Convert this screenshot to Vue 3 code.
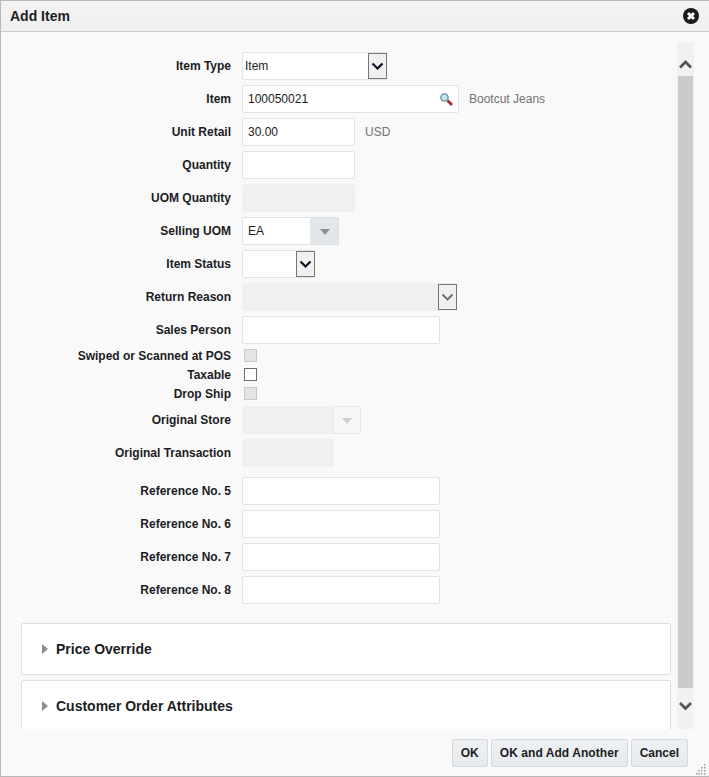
<script setup>
const refs = ['Reference No. 5', 'Reference No. 6', 'Reference No. 7', 'Reference No. 8']
const panels = ['Price Override', 'Customer Order Attributes']
</script>

<template>
  <div class="dialog">
    <header class="head">
      <h1 class="title">Add Item</h1>
      <svg class="close" width="16" height="16" viewBox="0 0 16 16">
        <circle cx="8" cy="8" r="8" fill="#1a1a1a" />
        <path d="M5 5l6 6M11 5l-6 6" stroke="#fff" stroke-width="3" />
      </svg>
    </header>
    <div class="content">
      <div class="scroll">
        <div class="form">
          <div class="row">
            <label class="lab">Item Type</label>
            <div class="field w145 select"><span class="val sel">Item</span>
              <span class="arrow"><svg width="13" height="9" viewBox="0 0 13 9"><path d="M1.5 1.500l5 5 5-5" fill="none" stroke="#0a0a20" stroke-width="2.200" /></svg></span>
            </div>
          </div>
          <div class="row">
            <label class="lab">Item</label>
            <div class="field w217"><span class="val">100050021</span>
              <svg class="mag" width="13" height="13" viewBox="0 0 13 13">
                <path d="M7.500 7.500l4.500 4.500" stroke="#a52a3a" stroke-width="2.800" />
                <circle cx="4.500" cy="4.500" r="3.600" fill="#c4e6e8" stroke="#5d969c" stroke-width="1.400" />
              </svg>
            </div>
            <span class="note">Bootcut Jeans</span>
          </div>
          <div class="row">
            <label class="lab">Unit Retail</label>
            <div class="field w113"><span class="val">30.00</span></div>
            <span class="note">USD</span>
          </div>
          <div class="row">
            <label class="lab">Quantity</label>
            <div class="field w113"></div>
          </div>
          <div class="row">
            <label class="lab">UOM Quantity</label>
            <div class="field w113 off"></div>
          </div>
          <div class="row">
            <label class="lab">Selling UOM</label>
            <div class="field w69"><span class="val">EA</span></div>
            <span class="drop"><i class="tri"></i></span>
          </div>
          <div class="row">
            <label class="lab">Item Status</label>
            <div class="field w73 select">
              <span class="arrow"><svg width="13" height="9" viewBox="0 0 13 9"><path d="M1.500 1.500l5 5 5-5" fill="none" stroke="#0a0a20" stroke-width="2.200" /></svg></span>
            </div>
          </div>
          <div class="row">
            <label class="lab">Return Reason</label>
            <div class="field w215 select off">
              <span class="arrow"><svg width="13" height="9" viewBox="0 0 13 9"><path d="M1.500 1.500l5 5 5-5" fill="none" stroke="#6b6b6b" stroke-width="1.800" /></svg></span>
            </div>
          </div>
          <div class="row">
            <label class="lab">Sales Person</label>
            <div class="field w198"></div>
          </div>
          <div class="checks">
            <div class="crow"><label class="lab">Swiped or Scanned at POS</label><span class="box boxoff"></span></div>
            <div class="crow"><label class="lab">Taxable</label><span class="box"></span></div>
            <div class="crow"><label class="lab">Drop Ship</label><span class="box boxoff"></span></div>
          </div>
          <div class="row">
            <label class="lab">Original Store</label>
            <div class="field w91 off"></div>
            <span class="drop dropoff"><i class="tri"></i></span>
          </div>
          <div class="row">
            <label class="lab">Original Transaction</label>
            <div class="field w92 off"></div>
          </div>
          <div class="refs">
            <div v-for="r in refs" :key="r" class="row">
              <label class="lab">{{ r }}</label>
              <div class="field w198"></div>
            </div>
          </div>
        </div>
        <section v-for="p in panels" :key="p" class="panel">
          <i class="disc"></i>
          <h2 class="ptitle">{{ p }}</h2>
        </section>
      </div>
      <div class="bar">
        <svg class="chev" width="15" height="34" viewBox="0 0 15 34"><path d="M2 25.500l5.500-5.500 5.500 5.500" fill="none" stroke="#555" stroke-width="2.800" /></svg>
        <div class="thumb"></div>
        <svg class="chev" width="15" height="41" viewBox="0 0 15 41"><path d="M2 15l5.500 5.500 5.500-5.500" fill="none" stroke="#555" stroke-width="2.800" /></svg>
      </div>
    </div>
    <footer class="foot">
      <button class="btn">OK</button>
      <button class="btn wide">OK and Add Another</button>
      <button class="btn">Cancel</button>
      <svg class="grip" width="11" height="11" viewBox="0 0 11 11" fill="#9a9a9a">
        <rect x="8" y="0" width="1.500" height="1.500" /><rect x="5" y="3" width="1.500" height="1.500" /><rect x="8" y="3" width="1.500" height="1.500" />
        <rect x="2" y="6" width="1.500" height="1.500" /><rect x="5" y="6" width="1.500" height="1.500" /><rect x="8" y="6" width="1.500" height="1.500" />
        <rect x="0" y="9" width="1.500" height="1.500" /><rect x="2.500" y="9" width="1.500" height="1.500" /><rect x="5" y="9" width="1.500" height="1.500" /><rect x="8" y="9" width="1.500" height="1.500" />
      </svg>
    </footer>
  </div>
</template>

<style>
html, body { margin: 0; background: #fff; }
</style>

<style scoped>
.dialog {
  box-sizing: border-box;
  width: 709px;
  height: 777px;
  display: flex;
  flex-direction: column;
  border: 1px solid #b9b9b9;
  border-right: 0;
  background: #f9f9f9;
  font-family: "Liberation Sans", Arial, sans-serif;
  color: #1c1c24;
  overflow: hidden;
}
.head {
  flex: none;
  height: 30px;
  display: flex;
  align-items: center;
  justify-content: space-between;
  padding: 0 10px 0 9px;
  background: linear-gradient(#f3f3f3, #f0f0f0);
  border-bottom: 1px solid #c4ced6;
}
.title { margin: 0; font-size: 14px; font-weight: 700; }
.content {
  flex: 1;
  min-height: 0;
  display: flex;
  align-items: stretch;
  overflow: hidden;
}
.scroll {
  width: 676px;
  padding: 20px 0 0 20px;
  box-sizing: border-box;
  overflow: hidden;
}
.form { display: flex; flex-direction: column; gap: 5px; }
.row { display: flex; align-items: center; height: 28px; }
.lab {
  flex: none;
  width: 210px;
  margin-right: 11px;
  text-align: right;
  font-size: 12px;
  font-weight: 700;
  white-space: nowrap;
}
.field {
  box-sizing: border-box;
  height: 28px;
  position: relative;
  display: flex;
  align-items: center;
  background: #fff;
  border: 1px solid #dfe4e8;
  border-radius: 2px;
}
.off { background: #f0f0f0; border-color: #f0f0f0; }
.w69 { width: 69px; border-radius: 2px 0 0 2px; }
.w73 { width: 73px; }
.w91 { width: 91px; }
.w92 { width: 92px; }
.w113 { width: 113px; }
.w145 { width: 145px; }
.w198 { width: 198px; }
.w215 { width: 215px; }
.w217 { width: 217px; }
.val { font-size: 12px; color: #1a1a1a; padding-left: 5px; }
.val.sel { padding-left: 2px; }
.select .arrow {
  position: absolute;
  right: -1px;
  top: 0;
  box-sizing: border-box;
  width: 19px;
  height: 26px;
  display: flex;
  align-items: center;
  justify-content: center;
  background: #f0f0f0;
  border: 1px solid #767676;
}
.mag { position: absolute; right: 5px; top: 7px; }
.note { margin-left: 10px; font-size: 12px; color: #737373; }
.drop {
  box-sizing: border-box;
  width: 28px;
  height: 28px;
  display: flex;
  align-items: center;
  justify-content: center;
  background: #e3e7ea;
  border: 1px solid #d9dee2;
  border-left: 0;
  border-radius: 0 2px 2px 0;
}
.dropoff { background: #f7f7f7; border: 1px solid #e6e6e6; }
.tri {
  width: 0;
  height: 0;
  margin-top: 2px;
  border-left: 5px solid transparent;
  border-right: 5px solid transparent;
  border-top: 6px solid #8b9196;
}
.dropoff .tri { border-top-color: #d0d0d0; }
.checks { display: flex; flex-direction: column; margin: -3px 0 -2px; }
.crow { display: flex; align-items: center; height: 19px; }
.box {
  box-sizing: border-box;
  width: 13px;
  height: 13px;
  margin-left: 2px;
  background: #fff;
  border: 1px solid #6d6d6d;
}
.boxoff { background: #e4e4e4; border-color: #c8c8c8; }
.refs { display: flex; flex-direction: column; gap: 5px; margin-top: 5px; }
.panel {
  box-sizing: border-box;
  width: 650px;
  height: 52px;
  margin-top: 19px;
  display: flex;
  align-items: center;
  gap: 8px;
  padding-left: 20px;
  background: #fff;
  border: 1px solid #d9e1e8;
  border-radius: 2px;
}
.panel + .panel { margin-top: 5px; height: 60px; align-items: flex-start; padding-top: 16px; }
.panel + .panel .disc { margin-top: 4px; }
.disc {
  width: 0;
  height: 0;
  border-top: 5px solid transparent;
  border-bottom: 5px solid transparent;
  border-left: 6px solid #8a8f94;
}
.ptitle { margin: 0; font-size: 14px; font-weight: 700; line-height: 18px; }
.bar {
  box-sizing: border-box;
  width: 17px;
  margin: 10px 0 0 0;
  padding: 0 1px;
  background: #f1f1f1;
  display: flex;
  flex-direction: column;
}
.chev { flex: none; display: block; }
.thumb { flex: 1; background: #cbcbcb; }
.foot {
  flex: none;
  height: 47px;
  position: relative;
  display: flex;
  justify-content: flex-end;
  gap: 3px;
  padding: 10px 21px 0 0;
  box-sizing: border-box;
}
.btn {
  box-sizing: border-box;
  height: 28px;
  padding: 0 8px;
  font-family: inherit;
  font-size: 12px;
  font-weight: 700;
  color: #1c1c24;
  background: linear-gradient(#eef1f3, #e6eaed);
  border: 1px solid #d3d9de;
  border-radius: 2px;
}
.wide { letter-spacing: 0.06px; }
.grip { position: absolute; right: 2px; bottom: 1px; }
</style>
